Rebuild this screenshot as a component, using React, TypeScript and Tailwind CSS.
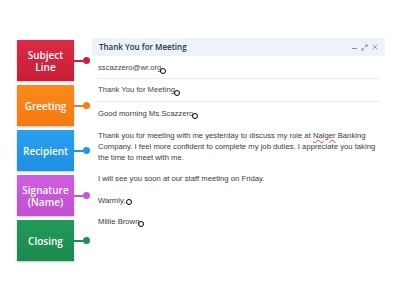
import { Minus, Maximize2, X } from 'lucide-react';

const labels = [
  { text: ['Subject', 'Line'], box: 'bg-gradient-to-b from-[#de2a44] to-[#c81d36]', dot: 'bg-[#cf1f3a]' },
  { text: ['Greeting'], box: 'bg-gradient-to-b from-[#fb8a1c] to-[#f47a10]', dot: 'bg-[#f57f15]' },
  { text: ['Recipient'], box: 'bg-gradient-to-b from-[#2aa0f0] to-[#1e8fe4]', dot: 'bg-[#2196ea]' },
  { text: ['Signature', '(Name)'], box: 'bg-gradient-to-b from-[#d05ee0] to-[#c04fd2]', dot: 'bg-[#c655d8]' },
  { text: ['Closing'], box: 'bg-gradient-to-b from-[#22995a] to-[#1b8a4e]', dot: 'bg-[#1e8f52]' },
];

function Ring() {
  return (
    <span className="inline-block w-[6px] h-[6px] rounded-full border-[1.5px] border-black relative top-[2.5px] -ml-[1px]" />
  );
}

export default function App() {
  return (
    <div className="w-[400px] h-[300px] bg-white overflow-hidden flex items-start pt-[38px] pl-[17px]">
      <div className="flex flex-col gap-[4px] pt-[2px]">
        {labels.map((l, i) => (
          <div key={i} className="flex items-center">
            <div
              className={`w-[57px] h-[41px] ${l.box} shadow-[0_1px_2px_rgba(0,0,0,0.25)] flex flex-col items-center justify-center text-white text-[10px] leading-[12px] font-semibold`}
              style={{ fontFamily: '"Open Sans", sans-serif' }}
            >
              {l.text.map((t) => (
                <span key={t}>{t}</span>
              ))}
            </div>
            <div className={`w-[9px] h-[2px] ${l.dot}`} />
            <div className={`w-[7px] h-[7px] rounded-full ${l.dot}`} />
          </div>
        ))}
      </div>

      <div className="ml-[2px] w-[293px]" style={{ fontFamily: '"Liberation Sans", Arial, sans-serif' }}>
        <div className="h-[18px] bg-[#eef2f9] flex items-center justify-between pl-[7px] pr-[6px]">
          <span className="text-[8px] font-semibold text-[#1f2e55]" style={{ fontFamily: '"Open Sans", sans-serif' }}>
            Thank You for Meeting
          </span>
          <div className="flex items-center gap-[3px] text-[#666]">
            <Minus size={7} strokeWidth={2.5} className="relative top-[1px]" />
            <Maximize2 size={7} strokeWidth={2} />
            <X size={8} strokeWidth={1.8} />
          </div>
        </div>

        <div className="mx-[5px] h-[23px] pt-[2px] flex items-center border-b border-[#ececec] text-[7.7px] text-[#444]">
          <span className="pl-[1px]">sscazzero@wr.org</span>
          <Ring />
        </div>
        <div className="mx-[5px] h-[23px] flex items-center border-b border-[#ececec] text-[7.7px] text-[#444]">
          <span className="pl-[1px]">Thank You for Meeting</span>
          <Ring />
        </div>

        <div className="px-[6px] pt-[6px] flex flex-col gap-[10.5px] text-[7.7px] leading-[11px] text-[#3a3a3a]">
          <p>
            Good morning Ms.Scazzero
            <Ring />
          </p>
          <p>
            Thank you for meeting with me yesterday to discuss my role at{' '}
            <span className="underline decoration-wavy decoration-[#e53935] decoration-[0.5px]">Nalger</span> Banking
            Company. I feel more confident to complete my job duties. I appreciate you taking the time to meet with me.
          </p>
          <p>I will see you soon at our staff meeting on Friday.</p>
          <p>
            Warmly, <Ring />
          </p>
          <p>
            Millie Brown
            <Ring />
          </p>
        </div>
      </div>
    </div>
  );
}
